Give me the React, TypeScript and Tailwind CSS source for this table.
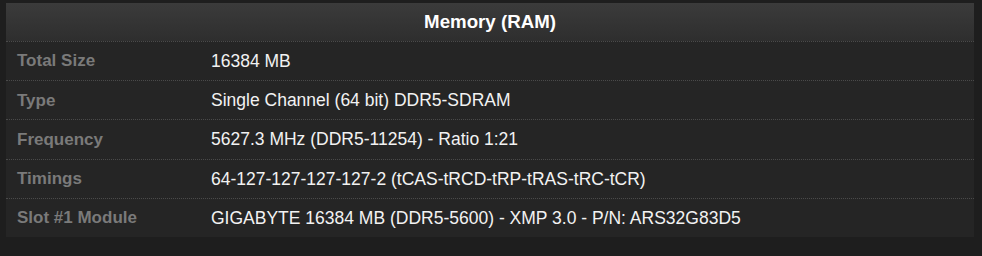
import React from 'react';

const rows = [
    {label: 'Total Size', value: '16384 MB'},
    {label: 'Type', value: 'Single Channel (64 bit) DDR5-SDRAM'},
    {label: 'Frequency', value: '5627.3 MHz (DDR5-11254) - Ratio 1:21'},
    {label: 'Timings', value: '64-127-127-127-127-2 (tCAS-tRCD-tRP-tRAS-tRC-tCR)'},
    {label: 'Slot #1 Module', value: 'GIGABYTE 16384 MB (DDR5-5600) - XMP 3.0 - P/N: ARS32G83D5'},
];

const App = () => {
    return (
        <div className="w-[982px] h-[256px] bg-[#1e1e1e] pt-[3px] pl-[6px] font-['Liberation_Sans',Arial,sans-serif]">
            <div className="w-[968px] h-[234px] bg-[#252525]">
                <div className="h-[38px] flex items-center justify-center bg-gradient-to-b from-[#3b3b3b] to-[#2e2e2e]">
                    <h1 className="text-[18.7px] font-bold text-white">Memory (RAM)</h1>
                </div>
                {rows.map((row) => (
                    <div
                        key={row.label}
                        className="h-[39.2px] flex items-center border-t border-dotted border-[#4a4a4a]"
                    >
                        <div className="w-[205px] pl-[11px] text-[17px] font-bold text-[#7a7a7a]">{row.label}</div>
                        <div className="text-[17.5px] text-[#f2f2f2]">{row.value}</div>
                    </div>
                ))}
            </div>
        </div>
    );
};

export default App;
